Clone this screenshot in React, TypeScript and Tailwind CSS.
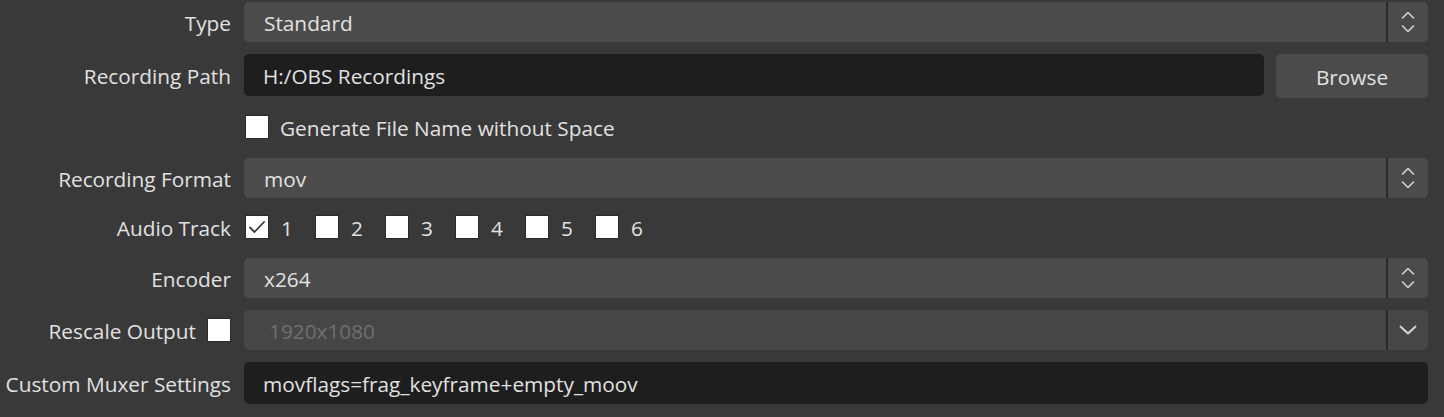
import React from "react";

const font = { fontFamily: '"Open Sans", "Noto Sans", sans-serif' };

function T({ children }: { children: React.ReactNode }) {
  return <span className="translate-y-[2px]">{children}</span>;
}

function UpDown() {
  return (
    <svg width="14" height="24" viewBox="0 0 14 24" fill="none" stroke="#d4d4d4" strokeWidth="1.6" strokeLinecap="round" strokeLinejoin="round">
      <path d="M1.5 8 L7 2.5 L12.5 8" />
      <path d="M1.5 16 L7 21.5 L12.5 16" />
    </svg>
  );
}

function Down() {
  return (
    <svg width="18" height="10" viewBox="0 0 18 10" fill="none" stroke="#d4d4d4" strokeWidth="2" strokeLinecap="round" strokeLinejoin="round">
      <path d="M1.5 1.5 L9 8.5 L16.5 1.5" />
    </svg>
  );
}

function Combo({ value, disabled, single }: { value: string; disabled?: boolean; single?: boolean }) {
  return (
    <div className={`flex-1 h-[40px] flex items-stretch rounded-[5px] ${disabled ? "bg-[#474647]" : "bg-[#4c4b4c]"}`}>
      <div className={`flex-1 flex items-center text-[20.8px] ${disabled ? "pl-[25px] text-[#6f6f6f]" : "pl-[20px] text-[#e1e1e1]"}`}>
        <T>{value}</T>
      </div>
      <div className="w-[2px] bg-[#2a292a]" />
      <div className="w-[40px] flex items-center justify-center">{single ? <Down /> : <UpDown />}</div>
    </div>
  );
}

function Box({ checked }: { checked?: boolean }) {
  return (
    <span className="w-[24px] h-[24px] border border-[#2c2b2c] bg-white flex items-center justify-center shrink-0">
      {checked && (
        <svg width="18" height="14" viewBox="0 0 18 14" fill="none" stroke="#3a393a" strokeWidth="1.8" strokeLinecap="round" strokeLinejoin="round">
          <path d="M2 7.5 L6.5 12 L16 2" />
        </svg>
      )}
    </span>
  );
}

function Label({ children }: { children: React.ReactNode }) {
  return <div className="w-[232px] shrink-0 flex justify-end items-center pr-[1px] text-[20.8px] text-[#e1e1e1]">{children}</div>;
}

export default function App() {
  return (
    <div className="w-[1444px] h-[417px] bg-[#3a393a] pt-[2px] pr-[16px] flex flex-col gap-3 overflow-hidden" style={font}>
      <div className="flex items-center h-[40px]">
        <Label><T>Type</T></Label>
        <div className="w-[12px]" />
        <Combo value="Standard" />
      </div>
      <div className="flex items-start h-[44px]">
        <div className="h-[42px] flex">
          <Label><T>Recording Path</T></Label>
        </div>
        <div className="w-[12px]" />
        <div className="flex-1 h-[42px] rounded-[5px] bg-[#1f1e1f] flex items-center pl-[19px] text-[20.8px] text-[#e1e1e1]"><T>H:/OBS Recordings</T></div>
        <div className="w-[12px]" />
        <div className="w-[152px] h-[44px] rounded-[5px] bg-[#4c4b4c] flex items-center justify-center text-[20.8px] text-[#e1e1e1]"><T>Browse</T></div>
      </div>
      <div className="flex items-start h-[36px]">
        <div className="w-[245px] shrink-0" />
        <div className="mt-[5px] h-[24px] flex items-center gap-[11px] text-[20.8px] text-[#e1e1e1]">
          <Box />
          <T>Generate File Name without Space</T>
        </div>
      </div>
      <div className="flex items-center h-[40px]">
        <Label><T>Recording Format</T></Label>
        <div className="w-[12px]" />
        <Combo value="mov" />
      </div>
      <div className="flex items-start h-[36px]">
        <div className="mt-[5px] h-[24px] flex">
          <Label><T>Audio Track</T></Label>
        </div>
        <div className="w-[13px]" />
        <div className="mt-[5px] h-[24px] flex items-center">
          {[1, 2, 3, 4, 5, 6].map((n) => (
            <div key={n} className="w-[70px] h-[24px] flex items-center gap-[12px] text-[20.8px] text-[#e1e1e1]">
              <Box checked={n === 1} />
              <T>{n}</T>
            </div>
          ))}
        </div>
      </div>
      <div className="flex items-center h-[40px]">
        <Label><T>Encoder</T></Label>
        <div className="w-[12px]" />
        <Combo value="x264" />
      </div>
      <div className="flex items-center h-[40px]">
        <Label>
          <T>Rescale Output</T>
          <span className="w-[11px]" />
          <Box />
        </Label>
        <div className="w-[12px]" />
        <Combo value="1920x1080" disabled single />
      </div>
      <div className="flex items-center h-[42px]">
        <Label><T>Custom Muxer Settings</T></Label>
        <div className="w-[12px]" />
        <div className="flex-1 h-[42px] rounded-[5px] bg-[#1f1e1f] flex items-center pl-[19px] text-[20.8px] text-[#e1e1e1]"><T>movflags=frag_keyframe+empty_moov</T></div>
      </div>
    </div>
  );
}
